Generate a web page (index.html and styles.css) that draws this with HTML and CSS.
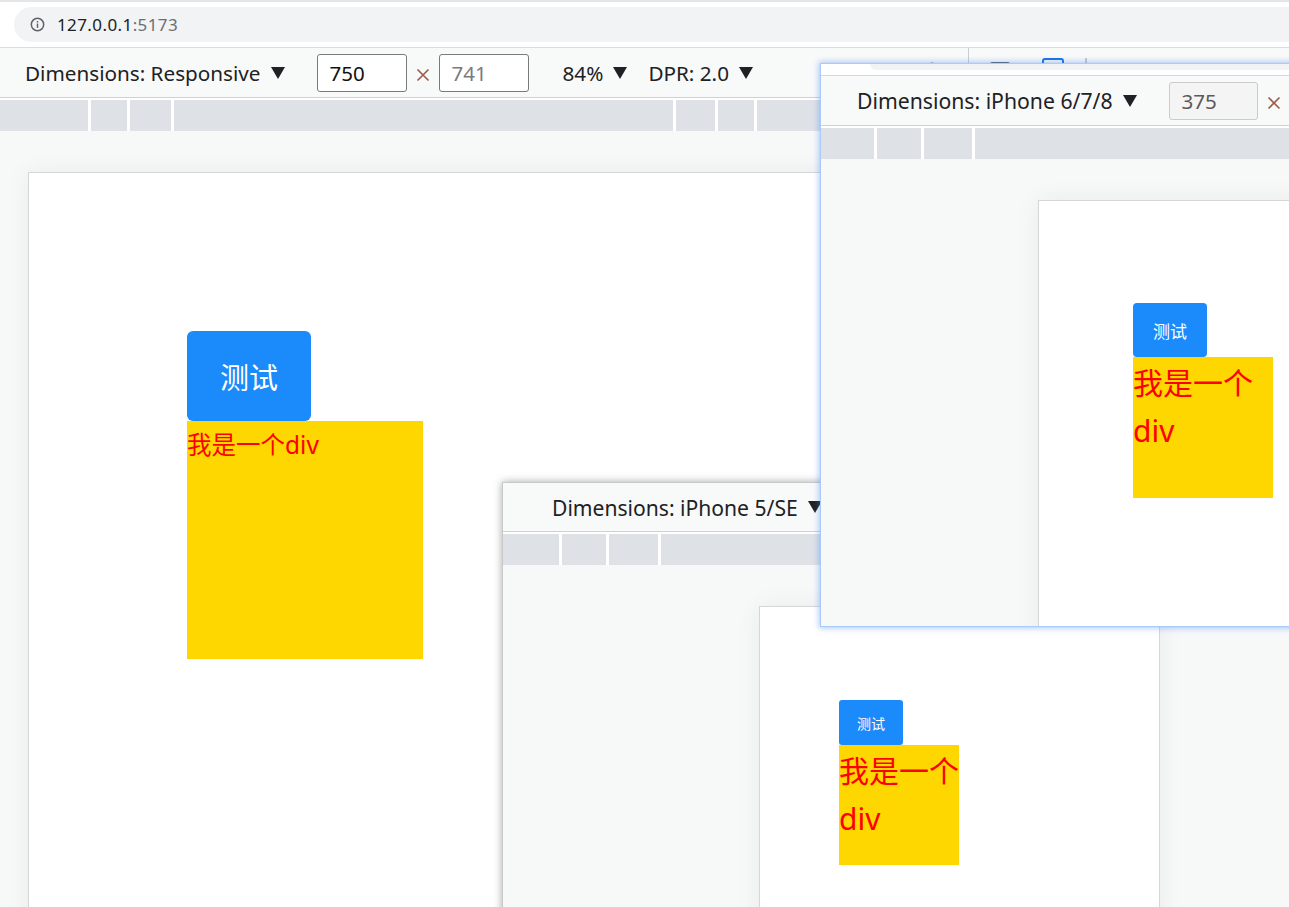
FILE: index.html
```html
<!DOCTYPE html>
<html lang="zh-CN">
<head>
<meta charset="utf-8">
<title>Responsive preview</title>
<link rel="stylesheet" href="styles.css">
</head>
<body>
<div class="desk">

  <section class="win base">
    <div class="tabstrip"></div>
    <div class="omni-row">
      <div class="omni">
        <svg class="info" width="15" height="15" viewBox="0 0 16 16"><circle cx="8" cy="8" r="6.6" fill="none" stroke="#5f6368" stroke-width="1.6"/><rect x="7.2" y="7" width="1.6" height="4.6" fill="#5f6368"/><rect x="7.2" y="4.3" width="1.6" height="1.6" fill="#5f6368"/></svg>
        <span class="host">127.0.0.1</span><span class="port">:5173</span>
      </div>
    </div>
    <div class="devbar devbar-base">
      <span class="label">Dimensions: Responsive</span>
      <svg class="tri" width="14" height="12" viewBox="0 0 14 12"><polygon points="0,0 14,0 7,12" fill="#202124"/></svg>
      <span class="field">750</span>
      <span class="times"><svg width="14" height="14" viewBox="0 0 14 14"><path d="M1.5 1.5 L12.5 12.5 M12.5 1.5 L1.5 12.5" stroke="#9d5e4d" stroke-width="1.7" fill="none"/></svg></span>
      <span class="field ph">741</span>
      <span class="label zoomlbl">84%</span>
      <svg class="tri" width="14" height="12" viewBox="0 0 14 12"><polygon points="0,0 14,0 7,12" fill="#202124"/></svg>
      <span class="label dpr">DPR: 2.0</span>
      <svg class="tri" width="14" height="12" viewBox="0 0 14 12"><polygon points="0,0 14,0 7,12" fill="#202124"/></svg>
      <div class="tools">
        <svg class="t-rot" width="12" height="22" viewBox="0 0 12 22"><circle cx="6" cy="3" r="2.6" fill="#5f6368"/><rect x="3" y="6" width="6" height="14" rx="2" fill="#5f6368"/></svg>
        <span class="vsep"></span>
        <svg class="t-dev" width="22" height="22" viewBox="0 0 22 22"><rect x="1" y="1" width="20" height="20" rx="3" fill="none" stroke="#5f6368" stroke-width="2"/></svg>
        <svg class="t-tog" width="22" height="30" viewBox="0 0 22 30"><rect x="1" y="1" width="20" height="28" rx="2" fill="none" stroke="#1a73e8" stroke-width="2"/></svg>
        <span class="vsep2"></span>
      </div>
    </div>
    <div class="ruler r-base"><i></i><i></i><i></i><i></i><i></i><i></i><i></i></div>
    <div class="stage stage-base">
      <div class="page page-base">
        <div class="btn btn-base">测试</div>
        <div class="box box-base">我是一个div</div>
      </div>
    </div>
  </section>

  <section class="win se">
    <div class="devbar devbar-se">
      <span class="label">Dimensions: iPhone 5/SE</span>
      <svg class="tri" width="14" height="12" viewBox="0 0 14 12"><polygon points="0,0 14,0 7,12" fill="#202124"/></svg>
    </div>
    <div class="ruler r-se"><i></i><i></i><i></i><i></i></div>
    <div class="stage stage-se">
      <div class="page page-se">
        <div class="btn btn-se">测试</div>
        <div class="box box-se">我是一个div</div>
      </div>
    </div>
  </section>

  <section class="win six">
    <div class="omni-stub"><div class="omni-tail"></div></div>
    <div class="devbar devbar-six">
      <span class="label">Dimensions: iPhone 6/7/8</span>
      <svg class="tri" width="14" height="12" viewBox="0 0 14 12"><polygon points="0,0 14,0 7,12" fill="#202124"/></svg>
      <span class="field off">375</span>
      <span class="times"><svg width="14" height="14" viewBox="0 0 14 14"><path d="M1.5 1.5 L12.5 12.5 M12.5 1.5 L1.5 12.5" stroke="#9d5e4d" stroke-width="1.7" fill="none"/></svg></span>
    </div>
    <div class="ruler r-six"><i></i><i></i><i></i><i></i></div>
    <div class="stage stage-six">
      <div class="page page-six">
        <div class="btn btn-six">测试</div>
        <div class="box box-six">我是一个div</div>
      </div>
    </div>
  </section>

</div>
</body>
</html>
```

FILE: styles.css
```css
* { box-sizing: border-box; }

body {
  margin: 0;
  font-family: "Noto Sans", "Noto Sans CJK SC", sans-serif;
  color: #202124;
}

.desk {
  position: relative;
  width: 1289px;
  height: 907px;
  overflow: hidden;
  background: #fff;
}

.win {
  position: absolute;
  display: flex;
  flex-direction: column;
  overflow: hidden;
  background: #fff;
}

/* ---------- base window ---------- */
.base { left: 0; top: 0; width: 1289px; height: 907px; }

.tabstrip { height: 2px; background: #e3e5e8; flex: none; }

.omni-row { height: 45px; padding: 5px 0 5px 14px; flex: none; }

.omni {
  height: 35px;
  border-radius: 18px 0 0 18px;
  background: #f1f3f4;
  display: flex;
  align-items: center;
  padding-left: 16px;
  font-size: 17px;
  letter-spacing: 0.4px;
}
.info { margin-right: 12px; }
.host { color: #202124; }
.port { color: #6b6f74; }

.devbar {
  flex: none;
  display: flex;
  align-items: center;
  background: #f8f9f9;
  border-bottom: 1px solid #cfd1d4;
  margin-bottom: 2px;
  font-size: 21px;
  white-space: nowrap;
}
.devbar-base { height: 51px; border-top: 1px solid #dadce0; padding-left: 25px; font-size: 20.7px; }
.devbar-six  { height: 51px; border-top: 1px solid #d6d8db; padding-left: 36px; font-size: 21.2px; }
.devbar-se   { height: 49px; padding-left: 49px; font-size: 21.1px; }

.label { color: #202124; }
.tri { margin-left: 10px; flex: none; }

.field {
  width: 90px;
  height: 38px;
  border: 1px solid #7a7a7a;
  border-radius: 3px;
  background: #fff;
  padding-left: 12px;
  display: flex;
  align-items: center;
  margin-left: 32px;
  color: #111;
  font-size: 20.5px;
}
.field.ph { margin-left: 0; color: #7b7b7b; }
.field.off { background: #f4f4f4; border-color: #cbcbcb; color: #5a5a5a; width: 89px; }

.times {
  width: 32px;
  display: flex;
  align-items: center;
  justify-content: center;
  padding-top: 4px;
}

.zoomlbl { margin-left: 34px; }
.dpr { margin-left: 21px; }

.tools { display: flex; align-items: center; align-self: stretch; margin-left: 173px; }
.vsep { width: 1px; align-self: stretch; background: #cacdd1; margin-left: 30px; }
.t-dev { margin-left: 20px; }
.t-tog { margin-left: 31px; }
.vsep2 { width: 2px; height: 30px; background: #c4c7cc; margin-left: 21px; }

.ruler {
  flex: none;
  height: 31px;
  display: grid;
  column-gap: 3px;
  background: #fff;
}
.ruler i { background: #dee1e6; }
.r-base { grid-template-columns: 88px 36px 41px 499px 39px 36px 1fr; }
.r-six  { grid-template-columns: 53px 44px 48px 1fr; }
.r-se   { grid-template-columns: 56px 44px 49px 1fr; }

.stage {
  flex: 1;
  background: #f7f8f8;
  padding-top: 41px;
  overflow: hidden;
}
.stage-base { padding-left: 28px; }
.stage-six  { padding-left: 217px; }
.stage-se   { padding-left: 256px; }

.page {
  background: #fff;
  border: 1px solid #d6d6d6;
  box-shadow: 0 0 24px rgba(0, 0, 0, 0.06);
  height: 900px;
}
.page-base { width: 1000px; }
.page-six  { width: 400px; }
.page-se   { width: 401px; }

.btn {
  background: #1b8bfb;
  color: #fff;
  display: flex;
  align-items: center;
  justify-content: center;
}
.btn-base { margin: 158px 0 0 158px; width: 124px; height: 90px; border-radius: 6px; font-size: 29px; }
.btn-six  { margin: 102px 0 0 94px; width: 74px; height: 54px; border-radius: 4px; font-size: 17px; }
.btn-se   { margin: 93px 0 0 79px; width: 64px; height: 45px; border-radius: 3px; font-size: 14px; }

.box { background: #ffd700; color: #ff0000; }
.box-base { margin-left: 158px; width: 236px; height: 238px; font-size: 24.5px; line-height: 48px; }
.box-six  { margin-left: 94px; width: 140px; height: 141px; font-size: 30px; line-height: 48px; padding-top: 2px; }
.box-se   { margin-left: 79px; width: 120px; height: 120px; font-size: 30px; line-height: 48px; padding-top: 2px; }

/* ---------- iPhone 5/SE window ---------- */
.se {
  left: 502px;
  top: 482px;
  width: 820px;
  height: 440px;
  border: 1px solid #c9c9c9;
  box-shadow: 0 0 8px rgba(0, 0, 0, 0.35);
}

/* ---------- iPhone 6/7/8 window ---------- */
.six {
  left: 820px;
  top: 63px;
  width: 500px;
  height: 564px;
  border: 1px solid #a9cbf7;
  box-shadow: 0 0 6px 1px rgba(66, 133, 244, 0.45);
}
.omni-stub { height: 11px; flex: none; background: #fff; }
.omni-tail {
  margin-left: 49px;
  height: 6px;
  background: #f1f3f4;
  border-bottom-left-radius: 6px;
}
```
